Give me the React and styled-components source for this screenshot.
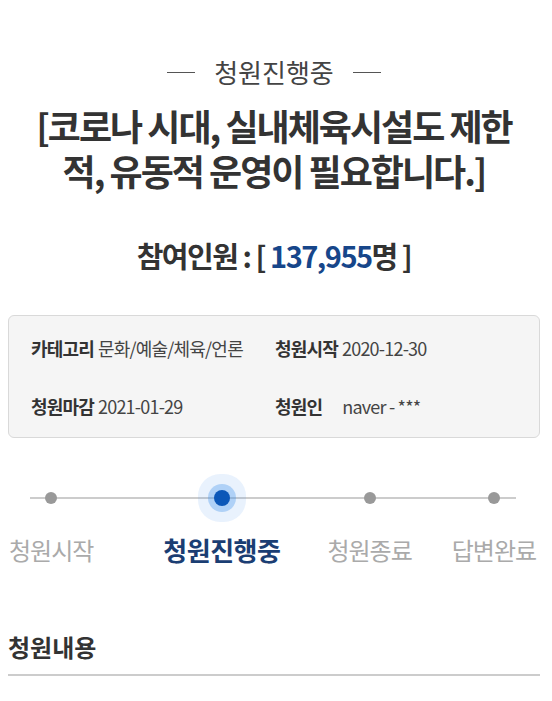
import styled, { createGlobalStyle } from 'styled-components'

const GlobalStyle = createGlobalStyle`
    body {
        margin: 0;
        background: #fff;
        font-family: "Noto Sans CJK KR", "Noto Sans", sans-serif;
        color: #333;
    }
`;

const Page = styled.div`
    width: 552px;
    padding: 0 12px 0 8px;
    box-sizing: border-box;
`;

const Status = styled.div`
    display: flex;
    justify-content: center;
    align-items: center;
    gap: 19px;
    padding-top: 53px;
    font-size: 26px;
    line-height: 38px;
    color: #444;
`;

const Dash = styled.span`
    width: 28px;
    height: 1px;
    background: #555;
`;

const Title = styled.h1`
    margin: 12px 0 0;
    text-align: center;
    font-size: 36px;
    font-weight: 700;
    line-height: 45px;
    letter-spacing: -2px;
    color: #333;
`;

const Count = styled.div`
    margin-top: 42px;
    text-align: center;
    font-size: 29px;
    font-weight: 700;
    line-height: 40px;
    letter-spacing: -1.5px;
    color: #333;
`;

const Number = styled.span`
    color: #17468a;
`;

const InfoBox = styled.div`
    margin-top: 40px;
    display: grid;
    grid-template-columns: 244px 1fr;
    row-gap: 25px;
    padding: 16px 22px 14px;
    background: #f5f5f5;
    border: 1px solid #d9d9d9;
    border-radius: 6px;
    font-size: 18px;
    line-height: 33px;
    letter-spacing: -0.8px;
    color: #444;
`;

const Label = styled.b`
    font-weight: 700;
    color: #333;
    margin-right: ${p => p.$gap || 4}px;
`;

const Stepper = styled.div`
    position: relative;
    margin-top: 48px;
    display: flex;

    &::before {
        content: '';
        position: absolute;
        left: 22px;
        right: 24px;
        top: 11px;
        height: 2px;
        background: #ccc;
    }
`;

const Step = styled.div`
    position: relative;
    display: flex;
    flex-direction: column;
    align-items: center;
    margin-left: ${p => p.$offset}px;
`;

const DotSlot = styled.div`
    height: 24px;
    display: flex;
    align-items: center;
`;

const Dot = styled.span`
    width: ${p => (p.$active ? 16 : 12)}px;
    height: ${p => (p.$active ? 16 : 12)}px;
    border-radius: 50%;
    background: ${p => (p.$active ? '#0b57b8' : '#999')};
    box-shadow: ${p =>
        p.$active
            ? '0 0 0 6px rgba(70,150,235,0.35), 0 0 0 16px rgba(70,150,235,0.12)'
            : 'none'};
`;

const StepName = styled.span`
    margin-top: 24px;
    font-size: ${p => (p.$active ? 26 : 24)}px;
    font-weight: ${p => (p.$active ? 700 : 400)};
    line-height: 32px;
    letter-spacing: ${p => (p.$active ? -0.5 : -1)}px;
    color: ${p => (p.$active ? '#1b3e73' : '#aaa')};
`;

const Section = styled.h2`
    margin: 66px 0 0;
    padding-bottom: 12px;
    border-bottom: 2px solid #ccc;
    font-size: 24px;
    font-weight: 700;
    line-height: 30px;
    color: #333;
`;

const steps = [
    { name: '청원시작', offset: 1 },
    { name: '청원진행중', offset: 70 },
    { name: '청원종료', offset: 47 },
    { name: '답변완료', offset: 40 },
].map((s, i) => ({ ...s, active: i === 1 }));

export default function App() {
    return (
        <>
            <GlobalStyle />
            <Page>
                <Status>
                    <Dash />
                    청원진행중
                    <Dash />
                </Status>
                <Title>
                    [코로나 시대, 실내체육시설도 제한
                    <br />
                    적, 유동적 운영이 필요합니다.]
                </Title>
                <Count>
                    참여인원 : [ <Number>137,955</Number>명 ]
                </Count>
                <InfoBox>
                    <div><Label>카테고리</Label>문화/예술/체육/언론</div>
                    <div><Label>청원시작</Label>2020-12-30</div>
                    <div><Label>청원마감</Label>2021-01-29</div>
                    <div><Label $gap={20}>청원인</Label>naver - ***</div>
                </InfoBox>
                <Stepper>
                    {steps.map(s => (
                        <Step key={s.name} $offset={s.offset}>
                            <DotSlot>
                                <Dot $active={s.active} />
                            </DotSlot>
                            <StepName $active={s.active}>{s.name}</StepName>
                        </Step>
                    ))}
                </Stepper>
                <Section>청원내용</Section>
            </Page>
        </>
    )
}
